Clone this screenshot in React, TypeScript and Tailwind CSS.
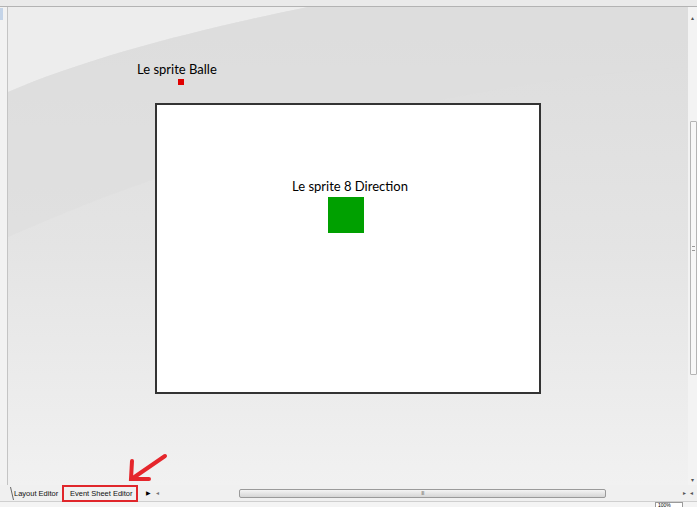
import React from 'react';

const labelFont = { fontFamily: 'Lato, "Noto Sans", sans-serif' };

function Canvas() {
  return (
    <div className="relative flex-1 h-full overflow-hidden border-l border-[#c4c4c4] bg-gradient-to-b from-[#dcdcdc] via-[#e4e4e4] to-[#f1f1f1]">
      {/* background swoosh */}
      <svg className="absolute inset-0" width="681" height="478" viewBox="0 0 681 478">
        <path d="M0 0 L300 0 C200 20 80 50 0 85 Z" fill="#eeeeee" opacity="0.9" />
        <path d="M0 85 C80 50 200 20 300 0 L681 0 L681 60 C500 70 250 120 0 230 Z" fill="#dddddd" opacity="0.6" />
      </svg>

      <div className="absolute left-[129px] top-[56px] text-[13px] text-black leading-none" style={labelFont}>
        Le sprite Balle
      </div>
      <div className="absolute left-[170px] top-[72px] w-[6px] h-[6px] bg-[#e00000]" />

      <div className="absolute left-[147px] top-[96px] w-[386px] h-[291px] bg-white border-2 border-[#333333]">
        <div className="absolute left-[135px] top-[75px] text-[13px] text-black leading-none whitespace-nowrap" style={labelFont}>
          Le sprite 8 Direction
        </div>
        <div className="absolute left-[171px] top-[92px] w-[36px] h-[36px] bg-[#00a000]" />
      </div>
    </div>
  );
}

function VScroll() {
  return (
    <div className="w-[9px] h-full bg-[#f3f3f3] flex flex-col items-end">
      <div className="h-[8px]" />
      <div className="w-full text-[6px] leading-none text-[#555] text-center">▴</div>
      <div className="h-[100px]" />
      <div className="w-[7px] h-[254px] border border-[#b4b4b4] bg-[#f7f7f7] rounded-[1px] flex items-center justify-center">
        <div className="w-[3px] h-[5px] border-y border-[#999]" />
      </div>
      <div className="flex-1" />
      <div className="w-full text-[6px] leading-none text-[#555] text-center mb-[2px]">▾</div>
    </div>
  );
}

function TabRow() {
  const tabFont = { fontFamily: '"Liberation Sans", Arial, sans-serif' };
  return (
    <div className="relative h-[16px] flex items-stretch bg-[#f0f0f0] text-[7.5px] text-[#111]" style={tabFont}>
      <div className="w-[10px]" />
      <svg width="4" height="16" className="shrink-0">
        <path d="M0.5 2 L3.5 15" stroke="#666" strokeWidth="1" />
      </svg>
      <div className="w-[48px] flex items-center pt-[1px]">Layout Editor</div>
      <div className="w-[75px] flex items-center pl-[7px] pt-[1px] border-l border-[#999]">
        Event Sheet Editor
      </div>
      <div className="w-[9px]" />
      <div className="w-[5px] flex items-center text-[6px] text-black">▶</div>
      <div className="w-[5px]" />
      <div className="w-[5px] flex items-center text-[6px] text-[#777]">◂</div>
      <div className="w-[78px]" />
      <div className="flex items-center">
        <div className="w-[367px] h-[9px] border border-[#9a9a9a] rounded-[2px] bg-gradient-to-b from-[#f4f4f4] to-[#d6d6d6] flex items-center justify-center">
          <span className="text-[5px] leading-none text-[#666] tracking-[-0.5px]">III</span>
        </div>
      </div>
      <div className="flex-1" />
      <div className="flex items-center text-[6px] text-[#555] gap-[4px] pr-[4px]">
        <span>▸</span>
        <span>◂</span>
      </div>

      {/* highlight on the Event Sheet Editor tab */}
      <div className="absolute left-[62px] top-[0px] w-[76px] h-[17px] border-2 border-[#e0262b]" />
    </div>
  );
}

export default function App() {
  return (
    <div className="relative w-[697px] h-[507px] overflow-hidden bg-[#f0f0f0]">
      <div className="h-[7px] bg-[#eaeaea] border-b border-[#b3b3b3]" />
      <div className="h-[478px] flex">
        <div className="w-[7px] h-full bg-[#f2f2f2]">
          <div className="mt-[1px] w-[3px] h-[12px] bg-[#c4d4e8]" />
        </div>
        <Canvas />
        <VScroll />
      </div>
      <TabRow />
      <div className="h-[6px] bg-[#f4f4f4] border-t border-[#cfcfcf] flex justify-end">
        <div className="w-[28px] h-[6px] border border-[#9a9a9a] bg-white mr-[14px] text-[5px] leading-none pl-[2px]" style={{ fontFamily: '"Liberation Sans", sans-serif' }}>100%</div>
      </div>

      {/* annotation arrow */}
      <svg className="absolute left-0 top-0 pointer-events-none" width="697" height="507">
        <g stroke="#e5262c" strokeWidth="4" strokeLinecap="round" fill="none">
          <path d="M165 456 L133 478" />
          <path d="M132 461 L131 479 L149 479" />
        </g>
      </svg>
    </div>
  );
}
